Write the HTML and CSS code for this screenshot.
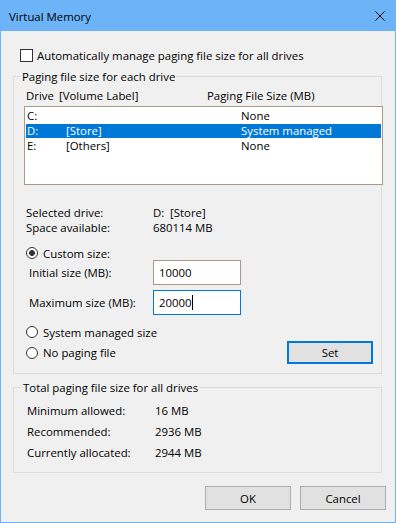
FILE: index.html
```html
<!DOCTYPE html>
<html>
<head>
<meta charset="utf-8">
<title>Virtual Memory</title>
<link rel="stylesheet" href="styles.css">
</head>
<body>
<div class="window">
  <div class="titlebar">
    <span class="title">Virtual Memory</span>
    <svg class="close" width="10" height="10" viewBox="0 0 10 10"><path d="M0.5 0.5 L9.5 9.5 M9.5 0.5 L0.5 9.5" stroke="#000" stroke-width="1" fill="none"/></svg>
  </div>
  <div class="client">
    <div class="auto-row"><span class="checkbox"></span><span>Automatically manage paging file size for all drives</span></div>

    <div class="group group-drives">
      <div class="caption">Paging file size for each drive</div>
      <div class="list-header"><span class="hd-drive">Drive</span><span class="hd-label">[Volume Label]</span><span>Paging File Size (MB)</span></div>
      <div class="listbox">
        <div class="row"><span class="c1">C:</span><span class="c2"></span><span>None</span></div>
        <div class="row selected"><span class="c1">D:</span><span class="c2">[Store]</span><span>System managed</span></div>
        <div class="row"><span class="c1">E:</span><span class="c2">[Others]</span><span>None</span></div>
      </div>
      <div class="info">
        <div class="info-row"><span class="info-label">Selected drive:</span><span class="info-drive">D:</span><span>[Store]</span></div>
        <div class="info-row"><span class="info-label">Space available:</span><span>680114 MB</span></div>
      </div>
      <div class="radio-row custom-row"><span class="radio checked"></span><span>Custom size:</span></div>
      <div class="size-row"><span class="size-label">Initial size (MB):</span><div class="field">10000</div></div>
      <div class="size-row max-row"><span class="size-label">Maximum size (MB):</span><div class="field focused">20000<span class="caret"></span></div></div>
      <div class="radio-row system-row"><span class="radio"></span><span>System managed size</span></div>
      <div class="nopaging-row">
        <div class="radio-inline"><span class="radio"></span><span>No paging file</span></div>
        <div class="btn btn-default set-btn">Set</div>
      </div>
    </div>

    <div class="group group-total">
      <div class="caption caption-total">Total paging file size for all drives</div>
      <div class="totals">
        <div class="total-row"><span class="total-label">Minimum allowed:</span><span>16 MB</span></div>
        <div class="total-row"><span class="total-label">Recommended:</span><span>2936 MB</span></div>
        <div class="total-row"><span class="total-label">Currently allocated:</span><span>2944 MB</span></div>
      </div>
    </div>

    <div class="buttons">
      <div class="btn">OK</div>
      <div class="btn">Cancel</div>
    </div>
  </div>
</div>
</body>
</html>
```
FILE: styles.css
```css
html, body {
  margin: 0;
  padding: 0;
  background: #f0f0f0;
}

.window {
  width: 396px;
  height: 523px;
  display: flex;
  flex-direction: column;
  font-family: "Open Sans", "Noto Sans", sans-serif;
  font-size: 11.4px;
  color: #000;
}

.titlebar {
  height: 31px;
  flex: none;
  background: #6db3f8;
  display: flex;
  align-items: center;
  padding: 0 11px 0 9px;
}

.title {
  line-height: 15px;
  margin-top: 1px;
}

.close {
  margin-left: auto;
  display: block;
}

.client {
  flex: 1;
  background: #f0f0f0;
  border: 1px solid #6db3f8;
  border-top: 0;
  display: flex;
  flex-direction: column;
}

.auto-row {
  display: flex;
  align-items: center;
  height: 15px;
  line-height: 15px;
  margin-top: 17px;
  padding-left: 19px;
}

.checkbox {
  width: 13px;
  height: 13px;
  box-sizing: border-box;
  border: 1px solid #333;
  background: #fff;
  margin-right: 4px;
  flex: none;
}

.group {
  margin-left: 12px;
  width: 369px;
  box-sizing: border-box;
  border: 1px solid #dcdcdc;
  display: flex;
  flex-direction: column;
  flex: none;
}

.group-drives {
  margin-top: 13px;
  height: 298px;
}

.group-total {
  margin-top: 13px;
  height: 86px;
}

.caption {
  align-self: flex-start;
  margin: -8px 0 0 7px;
  padding: 0 1px;
  background: #f0f0f0;
  line-height: 15px;
  height: 15px;
}

.caption-total {
  margin-left: 8px;
}

.list-header {
  display: flex;
  margin-top: 4px;
  padding-left: 12px;
  line-height: 15px;
}

.hd-drive { width: 33px; }
.hd-label { width: 148px; }

.listbox {
  margin: 3px 0 0 10px;
  width: 359px;
  height: 79px;
  box-sizing: border-box;
  border: 1px solid #a89a86;
  background: #fff;
  padding-top: 1px;
  flex: none;
}

.row {
  display: flex;
  height: 14px;
  line-height: 14px;
  padding-top: 1px;
  margin: 0 1px;
  background-clip: content-box;
}

.row.selected {
  background-color: #0078d7;
  color: #fff;
}

.c1 { width: 39px; padding-left: 1px; }
.c2 { width: 175px; }

.info {
  margin-top: 20px;
  padding-left: 12px;
  line-height: 15px;
}

.info-row { display: flex; }
.info-label { width: 127px; }
.info-drive { width: 17px; }

.radio-row {
  display: flex;
  align-items: center;
  height: 14px;
  padding-left: 12px;
}

.custom-row { margin-top: 11px; }
.system-row { margin-top: 10px; }

.radio {
  width: 12px;
  height: 12px;
  box-sizing: border-box;
  border: 1px solid #333;
  border-radius: 50%;
  background: #fff;
  margin-right: 5px;
  flex: none;
}

.radio.checked {
  background: radial-gradient(circle, #333 0 2.6px, #fff 3.2px);
}

.size-row {
  display: flex;
  align-items: center;
  padding-left: 15px;
}

.max-row { margin-top: 5px; }

.size-label { width: 124px; }

.field {
  width: 88px;
  height: 25px;
  box-sizing: border-box;
  border: 1px solid #a89a86;
  background: #fff;
  padding-left: 5px;
  display: flex;
  align-items: center;
}

.field.focused { border-color: #0078d7; }

.caret {
  width: 1px;
  height: 15px;
  background: #000;
}

.nopaging-row {
  display: flex;
  align-items: center;
  margin-top: 2px;
  height: 23px;
  padding-left: 12px;
}

.radio-inline {
  display: flex;
  align-items: center;
}

.btn {
  width: 86px;
  height: 24px;
  box-sizing: border-box;
  background: #e1e1e1;
  border: 1px solid #adadad;
  display: flex;
  align-items: center;
  justify-content: center;
  flex: none;
}

.btn-default { border: 2px solid #0078d7; }

.set-btn {
  height: 23px;
  margin-left: auto;
  margin-right: 8px;
}

.totals {
  margin-top: 5px;
  padding-left: 13px;
}

.total-row {
  display: flex;
  height: 21px;
  line-height: 21px;
}

.total-label { width: 128px; }

.buttons {
  display: flex;
  justify-content: flex-end;
  gap: 9px;
  margin-top: 13px;
  padding-right: 9px;
}
```
